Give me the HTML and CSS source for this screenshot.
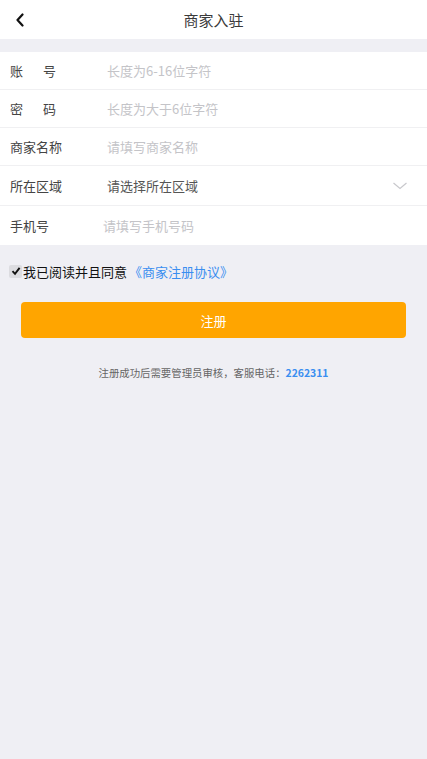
FILE: index.html
```html
<!DOCTYPE html>
<html lang="zh">
<head>
<meta charset="utf-8">
<title>商家入驻</title>
<link rel="stylesheet" href="styles.css">
</head>
<body>
<header class="topbar">
  <span class="back"><svg width="10" height="14" viewBox="0 0 10 14"><path d="M7.5 1.5 L2.5 7 L7.5 12.5" fill="none" stroke="#111" stroke-width="2.2" stroke-linecap="round" stroke-linejoin="round"/></svg></span>
  <h1 class="title">商家入驻</h1>
</header>
<div class="gap"></div>
<section class="form">
  <div class="row r38"><span class="label spaced">账号</span><span class="ph">长度为6-16位字符</span></div>
  <div class="row r38"><span class="label spaced">密码</span><span class="ph">长度为大于6位字符</span></div>
  <div class="row r38"><span class="label">商家名称</span><span class="ph">请填写商家名称</span></div>
  <div class="row r40"><span class="label">所在区域</span><span class="sel">请选择所在区域</span>
    <svg class="chev" width="16" height="8" viewBox="0 0 16 8"><path d="M1.5 1 L8 6.5 L14.5 1" fill="none" stroke="#c8c8cc" stroke-width="1.2"/></svg>
  </div>
  <div class="row r39 last"><span class="label short">手机号</span><span class="ph">请填写手机号码</span></div>
</section>
<div class="agree">
  <span class="box"><svg width="10" height="10" viewBox="0 0 10 10"><path d="M1.5 5.2 L4 7.8 L8.6 1.8" fill="none" stroke="#111" stroke-width="1.9"/></svg></span>
  <span class="agree-text">我已阅读并且同意</span><span class="link">《商家注册协议》</span>
</div>
<div class="btn-wrap"><div class="btn">注册</div></div>
<p class="note">注册成功后需要管理员审核，客服电话：<span class="tel">2262311</span></p>
</body>
</html>
```
FILE: styles.css
```css
html, body {
  margin: 0;
  padding: 0;
  background: #efeff4;
  font-family: "Noto Sans CJK SC", "Noto Sans", sans-serif;
  height: 759px;
}
.topbar {
  height: 39px;
  background: #fff;
  display: flex;
  align-items: center;
  justify-content: center;
  position: relative;
}
.back {
  position: absolute;
  left: 15px;
  top: 13px;
  display: flex;
}
.title {
  margin: 0;
  font-size: 15px;
  font-weight: 400;
  color: #3a3a3a;
  line-height: 39px;
}
.gap { height: 13px; }
.form { background: #fff; }
.row {
  display: flex;
  align-items: center;
  padding-left: 10px;
  border-bottom: 1px solid #f0f0f2;
  box-sizing: border-box;
  font-size: 13px;
}
.r38 { height: 38px; }
.r40 { height: 40px; }
.r39 { height: 39px; }
.row.last { border-bottom: none; }
.label {
  width: 97px;
  color: #444;
  flex: none;
}
.label.spaced { letter-spacing: 20px; }
.label.short { width: 93px; }
.ph { color: #c4c4c8; }
.sel { color: #555; flex: 1; }
.chev { margin-right: 19px; }
.agree {
  display: flex;
  align-items: center;
  padding: 15px 0 0 9px;
  height: 22px;
  font-size: 13px;
}
.box {
  width: 13px;
  height: 13px;
  background: #dcdce0;
  border-radius: 2px;
  display: flex;
  align-items: center;
  justify-content: center;
  margin-right: 1px;
}
.agree-text { color: #111; }
.link { color: #3a8ef0; margin-left: 2px; }
.btn-wrap { padding: 20px 21px 0 21px; }
.btn {
  height: 36px;
  background: #ffa500;
  border-radius: 4px;
  color: #fff;
  font-size: 13px;
  display: flex;
  align-items: center;
  justify-content: center;
}
.note {
  margin: 27px 0 0 0;
  text-align: center;
  font-size: 10.4px;
  color: #666;
}
.tel { color: #3a8ef0; font-weight: 700; }
```
